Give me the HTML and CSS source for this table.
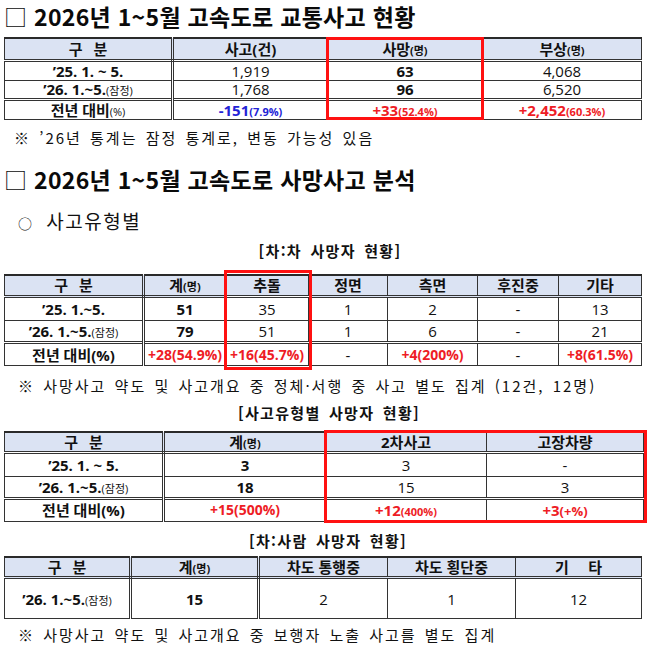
FILE: index.html
```html
<!DOCTYPE html>
<html lang="ko">
<head>
<meta charset="utf-8">
<title>2026년 1~5월 고속도로 교통사고 현황</title>
<link rel="stylesheet" href="styles.css">
</head>
<body>
<div class="page">
  <h1 class="title t-first"><span class="sq">□</span> 2026년 1~5월 고속도로 교통사고 현황</h1>

  <table class="grid g1">
    <colgroup><col class="c1"><col class="c2"><col class="c3"><col class="c4"></colgroup>
    <thead>
      <tr class="hrow">
        <th class="first gb">구 분</th>
        <th>사고(건)</th>
        <th class="hl">사망<small>(명)</small><span class="redbox rb1"></span></th>
        <th>부상<small>(명)</small></th>
      </tr>
    </thead>
    <tbody>
      <tr class="r1">
        <td class="first lab">’25. 1. ~ 5.</td>
        <td>1,919</td>
        <td class="b">63</td>
        <td>4,068</td>
      </tr>
      <tr class="r2">
        <td class="first lab">’26. 1.~5.<small>(잠정)</small></td>
        <td>1,768</td>
        <td class="b">96</td>
        <td>6,520</td>
      </tr>
      <tr class="r3 last">
        <td class="first lab">전년 대비<small>(%)</small></td>
        <td class="blue">-151<small>(7.9%)</small></td>
        <td class="red">+33<small>(52.4%)</small></td>
        <td class="red">+2,452<small>(60.3%)</small></td>
      </tr>
    </tbody>
  </table>

  <p class="note n1">※ ’26년 통계는 잠정 통계로, 변동 가능성 있음</p>

  <h2 class="title t-second"><span class="sq">□</span> 2026년 1~5월 고속도로 사망사고 분석</h2>

  <p class="sub"><span class="circ">○</span> 사고유형별</p>

  <p class="cap cap1">[차:차 사망자 현황]</p>
  <table class="grid g2">
    <colgroup><col class="c1"><col class="c2"><col class="c3"><col class="c4"><col class="c5"><col class="c6"><col class="c7"></colgroup>
    <thead>
      <tr class="hrow">
        <th class="first gb">구 분</th>
        <th>계<small>(명)</small></th>
        <th class="hl">추돌<span class="redbox rb2"></span></th>
        <th>정면</th>
        <th>측면</th>
        <th>후진중</th>
        <th>기타</th>
      </tr>
    </thead>
    <tbody>
      <tr class="r1">
        <td class="first lab">’25. 1.~5.</td>
        <td class="b">51</td>
        <td>35</td>
        <td>1</td>
        <td>2</td>
        <td>-</td>
        <td>13</td>
      </tr>
      <tr class="r2">
        <td class="first lab">’26. 1.~5.<small>(잠정)</small></td>
        <td class="b">79</td>
        <td>51</td>
        <td>1</td>
        <td>6</td>
        <td>-</td>
        <td>21</td>
      </tr>
      <tr class="r3 last">
        <td class="first lab">전년 대비(%)</td>
        <td class="red mid">+28(54.9%)</td>
        <td class="red mid">+16(45.7%)</td>
        <td>-</td>
        <td class="red mid">+4(200%)</td>
        <td>-</td>
        <td class="red mid">+8(61.5%)</td>
      </tr>
    </tbody>
  </table>

  <p class="note n2">※ 사망사고 약도 및 사고개요 중 정체·서행 중 사고 별도 집계 (12건, 12명)</p>

  <p class="cap cap2">[사고유형별 사망자 현황]</p>
  <table class="grid g3">
    <colgroup><col class="c1"><col class="c2"><col class="c3"><col class="c4"></colgroup>
    <thead>
      <tr class="hrow">
        <th class="first gb">구 분</th>
        <th>계<small>(명)</small></th>
        <th class="hl">2차사고<span class="redbox rb3"></span></th>
        <th>고장차량</th>
      </tr>
    </thead>
    <tbody>
      <tr class="r1">
        <td class="first lab">’25. 1. ~ 5.</td>
        <td class="b">3</td>
        <td>3</td>
        <td>-</td>
      </tr>
      <tr class="r2">
        <td class="first lab">’26. 1.~5.<small>(잠정)</small></td>
        <td class="b">18</td>
        <td>15</td>
        <td>3</td>
      </tr>
      <tr class="r3 last">
        <td class="first lab">전년 대비(%)</td>
        <td class="red mid">+15(500%)</td>
        <td class="red">+12<small>(400%)</small></td>
        <td class="red">+3<small class="mid2">(+%)</small></td>
      </tr>
    </tbody>
  </table>

  <p class="cap cap3">[차:사람 사망자 현황]</p>
  <table class="grid g4">
    <colgroup><col class="c1"><col class="c2"><col class="c3"><col class="c4"><col class="c5"></colgroup>
    <thead>
      <tr class="hrow">
        <th class="first gb">구 분</th>
        <th class="second">계<small>(명)</small></th>
        <th>차도 통행중</th>
        <th>차도 횡단중</th>
        <th class="wide">기&nbsp;&nbsp;&nbsp;&nbsp;&nbsp;타</th>
      </tr>
    </thead>
    <tbody>
      <tr class="r1">
        <td class="first lab">’26. 1.~5.<small>(잠정)</small></td>
        <td class="second b">15</td>
        <td>2</td>
        <td>1</td>
        <td>12</td>
      </tr>
    </tbody>
  </table>

  <p class="note n3">※ 사망사고 약도 및 사고개요 중 보행자 노출 사고를 별도 집계</p>
</div>
</body>
</html>
```
FILE: styles.css
```css
* { box-sizing: border-box; }
html, body { margin: 0; padding: 0; background: #ffffff; }
body {
  width: 650px;
  color: #111;
  font-family: "Noto Sans CJK KR", "Noto Sans", sans-serif;
}
.page { padding: 0 0 0 4px; }

.title {
  margin: 0;
  font-size: 23px;
  line-height: 28px;
  height: 28px;
  font-weight: 700;
  letter-spacing: 0.3px;
  white-space: nowrap;
  color: #0a0a0a;
}
.title .sq { font-weight: 400; }
.t-first { margin-top: 2px; }
.t-second { margin-top: 16px; }

.note {
  margin: 0;
  font-size: 15px;
  line-height: 22px;
  height: 22px;
  letter-spacing: 2px;
  word-spacing: 2px;
  color: #111;
  white-space: nowrap;
}
.n1 { margin-top: 7px; padding-left: 10px; }
.n2 { margin-top: 9px; padding-left: 14px; }
.n3 { margin-top: 5px; padding-left: 14px; }

.sub {
  margin: 16px 0 0;
  padding-left: 14px;
  font-size: 19px;
  line-height: 24px;
  height: 24px;
  letter-spacing: 1.5px;
}
.sub .circ { font-size: 14px; margin-right: 6px; }

.cap {
  margin: 0;
  text-align: center;
  font-weight: 700;
  font-size: 15px;
  line-height: 20px;
  height: 20px;
  letter-spacing: 1.3px;
  word-spacing: 3px;
}
.cap1 { margin-top: 8px; padding-left: 6px; }
.cap2 { margin-top: 6px; padding-left: 4px; }
.cap3 { margin-top: 9px; padding-left: 2px; }

/* tables */
.grid {
  border-collapse: collapse;
  table-layout: fixed;
  width: 637px;
  border-top: 2px solid #2a2a2a;
  border-bottom: 1px solid #2a2a2a;
  border-left: 1px solid #444;
  border-right: 1px solid #444;
  font-family: "Open Sans", "Noto Sans CJK KR", sans-serif;
  font-size: 15px;
}
.grid th, .grid td {
  border: 1px solid #333;
  padding: 0;
  text-align: center;
  vertical-align: middle;
  line-height: 16px;
  white-space: nowrap;
}
.grid th {
  background: #dbe3f3;
  font-weight: 700;
}
.grid th.gb { word-spacing: 7px; }
.grid thead th { border-bottom: 3px double #333; }
.grid tr.last td { border-top: 3px double #333; }
.grid .first { border-right: 3px double #333; }
.grid .second { border-right: 3px double #333; }
.grid small { font-size: 11px; font-weight: 400; line-height: 0; }
.grid th small { font-size: 11px; font-weight: 700; }
.grid .lab { font-weight: 700; }
.grid .lab small { font-weight: 400; }
.grid .b { font-weight: 700; }
.grid .red { color: #ee1c25; font-weight: 700; }
.grid .blue { color: #2323d6; font-weight: 700; }
.grid .red small, .grid .blue small { font-weight: 700; }
.grid .mid { font-size: 14px; }
.grid .mid2 { font-size: 13px; }
.wide { letter-spacing: 0; }

.hl { position: relative; }
.redbox {
  position: absolute;
  border: 3px solid #ff1111;
  pointer-events: none;
}

/* table 1 */
.g1 { margin-top: 7px; }
.g1 .c1 { width: 168px; }
.g1 .c2 { width: 155px; }
.g1 .c3 { width: 155px; }
.g1 .c4 { width: 159px; }
.g1 .hrow { height: 22px; }
.g1 .r1 { height: 20px; }
.g1 .r2 { height: 19px; }
.g1 .r3 { height: 20px; }
.rb1 { top: -2px; left: -2px; right: -2px; height: 83px; }

/* table 2 */
.g2 { margin-top: 13px; }
.g2 .c1 { width: 139px; }
.g2 .c2 { width: 82px; }
.g2 .c3 { width: 83px; }
.g2 .c4 { width: 79px; }
.g2 .c5 { width: 90px; }
.g2 .c6 { width: 81px; }
.g2 .c7 { width: 83px; }
.g2 .hrow { height: 22px; }
.g2 .r1 { height: 24px; }
.g2 .r2 { height: 22px; }
.g2 .r3 { height: 23px; }
.rb2 { top: -6px; left: -2px; right: -4px; height: 100px; }

/* table 3 */
.g3 { margin-top: 8px; width: 639px; }
.g3 .c1 { width: 159px; }
.g3 .c2 { width: 162px; }
.g3 .c3 { width: 161px; }
.g3 .c4 { width: 157px; }
.g3 .hrow { height: 20px; }
.g3 .r1 { height: 24px; }
.g3 .r2 { height: 22px; }
.g3 .r3 { height: 23px; }
.rb3 { top: -3px; left: -2px; width: 323px; height: 93px; }

/* table 4 */
.g4 { margin-top: 5px; }
.g4 .c1 { width: 126px; }
.g4 .c2 { width: 128px; }
.g4 .c3 { width: 129px; }
.g4 .c4 { width: 128px; }
.g4 .c5 { width: 126px; }
.g4 .hrow { height: 21px; }
.g4 .r1 { height: 41px; }
```
